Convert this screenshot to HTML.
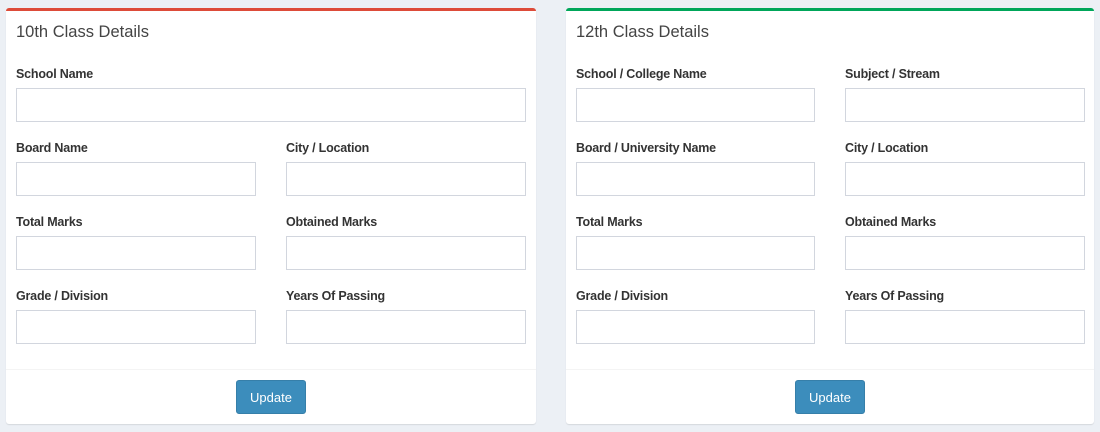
<!DOCTYPE html>
<html><head><meta charset="utf-8"><style>
*{box-sizing:border-box;margin:0;padding:0}
body{width:1100px;height:432px;background:#ecf0f5;font-family:"Liberation Sans",sans-serif;position:relative;overflow:hidden;color:#333}
.box{position:absolute;top:8px;height:416px;background:#fff;border-top:3px solid;border-radius:3px;box-shadow:0 1px 1px rgba(0,0,0,.1)}
.t{position:absolute;left:10px;top:12px;font-size:16.5px;color:#444}
.l{position:absolute;font-size:12.5px;font-weight:bold;color:#333;letter-spacing:-0.2px}
.i{position:absolute;height:34px;border:1px solid #d2d6de;background:#fff}
.f{position:absolute;left:0;right:0;top:358px;border-top:1px solid #f4f4f4}
.b{position:absolute;top:369px;width:70px;height:34px;background:#3c8dbc;border:1px solid #367fa9;border-radius:3px;color:#fff;font-size:13px;text-align:center;line-height:34px}
</style></head><body>
<div class="box" style="left:6px;width:530px;border-color:#dd4b39">
<div class="t">10th Class Details</div>
<div class="l" style="left:10px;top:56px">School Name</div>
<div class="i" style="left:10px;top:77px;width:510px"></div>
<div class="l" style="left:10px;top:130px">Board Name</div>
<div class="l" style="left:280px;top:130px">City / Location</div>
<div class="i" style="left:10px;top:151px;width:240px"></div>
<div class="i" style="left:280px;top:151px;width:240px"></div>
<div class="l" style="left:10px;top:204px">Total Marks</div>
<div class="l" style="left:280px;top:204px">Obtained Marks</div>
<div class="i" style="left:10px;top:225px;width:240px"></div>
<div class="i" style="left:280px;top:225px;width:240px"></div>
<div class="l" style="left:10px;top:278px">Grade / Division</div>
<div class="l" style="left:280px;top:278px">Years Of Passing</div>
<div class="i" style="left:10px;top:299px;width:240px"></div>
<div class="i" style="left:280px;top:299px;width:240px"></div>
<div class="f"></div>
<div class="b" style="left:230px">Update</div>
</div>
<div class="box" style="left:566px;width:528px;border-color:#00a65a">
<div class="t">12th Class Details</div>
<div class="l" style="left:10px;top:56px">School / College Name</div>
<div class="l" style="left:279px;top:56px">Subject / Stream</div>
<div class="i" style="left:10px;top:77px;width:239px"></div>
<div class="i" style="left:279px;top:77px;width:240px"></div>
<div class="l" style="left:10px;top:130px">Board / University Name</div>
<div class="l" style="left:279px;top:130px">City / Location</div>
<div class="i" style="left:10px;top:151px;width:239px"></div>
<div class="i" style="left:279px;top:151px;width:240px"></div>
<div class="l" style="left:10px;top:204px">Total Marks</div>
<div class="l" style="left:279px;top:204px">Obtained Marks</div>
<div class="i" style="left:10px;top:225px;width:239px"></div>
<div class="i" style="left:279px;top:225px;width:240px"></div>
<div class="l" style="left:10px;top:278px">Grade / Division</div>
<div class="l" style="left:279px;top:278px">Years Of Passing</div>
<div class="i" style="left:10px;top:299px;width:239px"></div>
<div class="i" style="left:279px;top:299px;width:240px"></div>
<div class="f"></div>
<div class="b" style="left:229px">Update</div>
</div>
</body></html>
